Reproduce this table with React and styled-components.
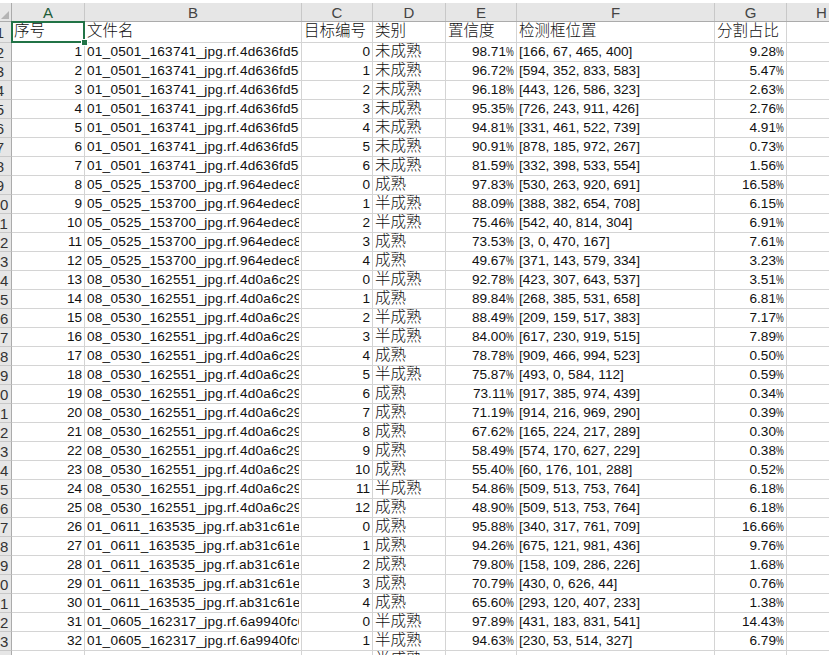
import React from 'react';
import styled, { createGlobalStyle, css } from 'styled-components';

const COLS = '12px 73px 217px 71px 73px 71px 198px 72px 70px';

const GlobalStyle = createGlobalStyle`
  html, body {
    margin: 0;
    padding: 0;
    background: #fff;
  }
  body {
    font-family: 'Liberation Sans', 'Noto Sans CJK SC', sans-serif;
  }
`;

const Sheet = styled.div`
  width: 829px;
  height: 655px;
  overflow: hidden;
  padding-top: 3px;
  box-sizing: border-box;
  background: #fff;
`;

const HeaderRow = styled.div`
  display: grid;
  grid-template-columns: ${COLS};
  height: 18px;
  background: #e6e6e6;
  border-bottom: 1px solid #ababab;
`;

const Corner = styled.div`
  display: flex;
  align-items: flex-end;
  justify-content: flex-end;
  padding: 0 2px 2px 0;
  border-right: 1px solid #ababab;
`;

const ColHead = styled.div`
  display: flex;
  align-items: center;
  justify-content: center;
  border-right: 1px solid #c8c8c8;
  font-size: 15px;
  color: ${p => (p.active ? '#1d5c38' : '#444')};
  overflow: hidden;
`;

const Row = styled.div`
  display: grid;
  grid-template-columns: ${COLS};
  height: ${p => (p.tall ? 21 : 19)}px;
`;

const RowHead = styled.div`
  background: #e6e6e6;
  border-right: 1px solid #ababab;
  border-bottom: 1px solid #c8c8c8;
  overflow: hidden;
  display: flex;
  align-items: center;
  font-size: 15px;
  color: #333;
`;

const RowNum = styled.span`
  flex: none;
  width: 24px;
  margin-left: -12px;
  text-align: center;
`;

const Cell = styled.div`
  position: relative;
  display: flex;
  align-items: center;
  justify-content: ${p => (p.right ? 'flex-end' : 'flex-start')};
  padding: ${p => (p.cjk ? '0 2px 2px' : '0 2px')};
  border-right: 1px solid #d4d4d4;
  border-bottom: 1px solid #d4d4d4;
  white-space: nowrap;
  overflow: ${p => (p.active ? 'visible' : 'hidden')};
  font-size: ${p => (p.cjk ? '15.5px' : '13.6px')};
  font-weight: ${p => (p.cjk ? 300 : 400)};
  line-height: 1;
  color: #111;
  ${p =>
    p.active &&
    css`
      &::after {
        content: '';
        position: absolute;
        left: -1px;
        top: -1px;
        right: -1px;
        bottom: -1px;
        border: 2px solid #217346;
        pointer-events: none;
      }
      &::before {
        content: '';
        position: absolute;
        right: -4px;
        bottom: -4px;
        width: 5px;
        height: 5px;
        background: #217346;
        border: 1px solid #fff;
        z-index: 2;
      }
    `}
`;

const FileName = styled.span`
  display: block;
  overflow: hidden;
  letter-spacing: 0.25px;
`;

const Pct = styled.span`
  display: inline-block;
  width: 8px;
  transform: scaleX(0.64);
  transform-origin: left center;
`;

const F1 = '01_0501_163741_jpg.rf.4d636fd5e2a1';
const F2 = '05_0525_153700_jpg.rf.964edec8b7f3';
const F3 = '08_0530_162551_jpg.rf.4d0a6c29e810';
const F4 = '01_0611_163535_jpg.rf.ab31c61e5d02';
const F5 = '01_0605_162317_jpg.rf.6a9940fc0b17';

const rows = [
  [F1, 0, '未成熟', '98.71', '[166, 67, 465, 400]', '9.28'],
  [F1, 1, '未成熟', '96.72', '[594, 352, 833, 583]', '5.47'],
  [F1, 2, '未成熟', '96.18', '[443, 126, 586, 323]', '2.63'],
  [F1, 3, '未成熟', '95.35', '[726, 243, 911, 426]', '2.76'],
  [F1, 4, '未成熟', '94.81', '[331, 461, 522, 739]', '4.91'],
  [F1, 5, '未成熟', '90.91', '[878, 185, 972, 267]', '0.73'],
  [F1, 6, '未成熟', '81.59', '[332, 398, 533, 554]', '1.56'],
  [F2, 0, '成熟', '97.83', '[530, 263, 920, 691]', '16.58'],
  [F2, 1, '半成熟', '88.09', '[388, 382, 654, 708]', '6.15'],
  [F2, 2, '半成熟', '75.46', '[542, 40, 814, 304]', '6.91'],
  [F2, 3, '成熟', '73.53', '[3, 0, 470, 167]', '7.61'],
  [F2, 4, '成熟', '49.67', '[371, 143, 579, 334]', '3.23'],
  [F3, 0, '半成熟', '92.78', '[423, 307, 643, 537]', '3.51'],
  [F3, 1, '成熟', '89.84', '[268, 385, 531, 658]', '6.81'],
  [F3, 2, '半成熟', '88.49', '[209, 159, 517, 383]', '7.17'],
  [F3, 3, '半成熟', '84.00', '[617, 230, 919, 515]', '7.89'],
  [F3, 4, '成熟', '78.78', '[909, 466, 994, 523]', '0.50'],
  [F3, 5, '半成熟', '75.87', '[493, 0, 584, 112]', '0.59'],
  [F3, 6, '成熟', '73.11', '[917, 385, 974, 439]', '0.34'],
  [F3, 7, '成熟', '71.19', '[914, 216, 969, 290]', '0.39'],
  [F3, 8, '成熟', '67.62', '[165, 224, 217, 289]', '0.30'],
  [F3, 9, '成熟', '58.49', '[574, 170, 627, 229]', '0.38'],
  [F3, 10, '成熟', '55.40', '[60, 176, 101, 288]', '0.52'],
  [F3, 11, '半成熟', '54.86', '[509, 513, 753, 764]', '6.18'],
  [F3, 12, '成熟', '48.90', '[509, 513, 753, 764]', '6.18'],
  [F4, 0, '成熟', '95.88', '[340, 317, 761, 709]', '16.66'],
  [F4, 1, '成熟', '94.26', '[675, 121, 981, 436]', '9.76'],
  [F4, 2, '成熟', '79.80', '[158, 109, 286, 226]', '1.68'],
  [F4, 3, '成熟', '70.79', '[430, 0, 626, 44]', '0.76'],
  [F4, 4, '成熟', '65.60', '[293, 120, 407, 233]', '1.38'],
  [F5, 0, '半成熟', '97.89', '[431, 183, 831, 541]', '14.43'],
  [F5, 1, '半成熟', '94.63', '[230, 53, 514, 327]', '6.79'],
  [F5, 2, '半成熟', '47.06', '[158, 0, 253, 87]', '3.03'],
];

const letters = ['A', 'B', 'C', 'D', 'E', 'F', 'G', 'H'];
const titles = ['序号', '文件名', '目标编号', '类别', '置信度', '检测框位置', '分割占比', ''];

const Percent = ({ value }) => (
  <span>
    {value}
    <Pct>%</Pct>
  </span>
);

const App = () => (
  <Sheet>
    <GlobalStyle />
    <HeaderRow>
      <Corner>
        <svg width="8" height="8" viewBox="0 0 8 8">
          <polygon points="8,0 8,8 0,8" fill="#b4b4b4" />
        </svg>
      </Corner>
      {letters.map(l => (
        <ColHead key={l} active={l === 'A'}>
          {l}
        </ColHead>
      ))}
    </HeaderRow>
    <Row tall>
      <RowHead>
        <RowNum>1</RowNum>
      </RowHead>
      {titles.map((t, i) => (
        <Cell key={i} cjk active={i === 0}>
          {t}
        </Cell>
      ))}
    </Row>
    {rows.map((r, i) => (
      <Row key={i}>
        <RowHead>
          <RowNum>{i + 2}</RowNum>
        </RowHead>
        <Cell right>{i + 1}</Cell>
        <Cell>
          <FileName>{r[0]}</FileName>
        </Cell>
        <Cell right>{r[1]}</Cell>
        <Cell cjk>{r[2]}</Cell>
        <Cell right>
          <Percent value={r[3]} />
        </Cell>
        <Cell>{r[4]}</Cell>
        <Cell right>
          <Percent value={r[5]} />
        </Cell>
        <Cell />
      </Row>
    ))}
  </Sheet>
);

export default App;
